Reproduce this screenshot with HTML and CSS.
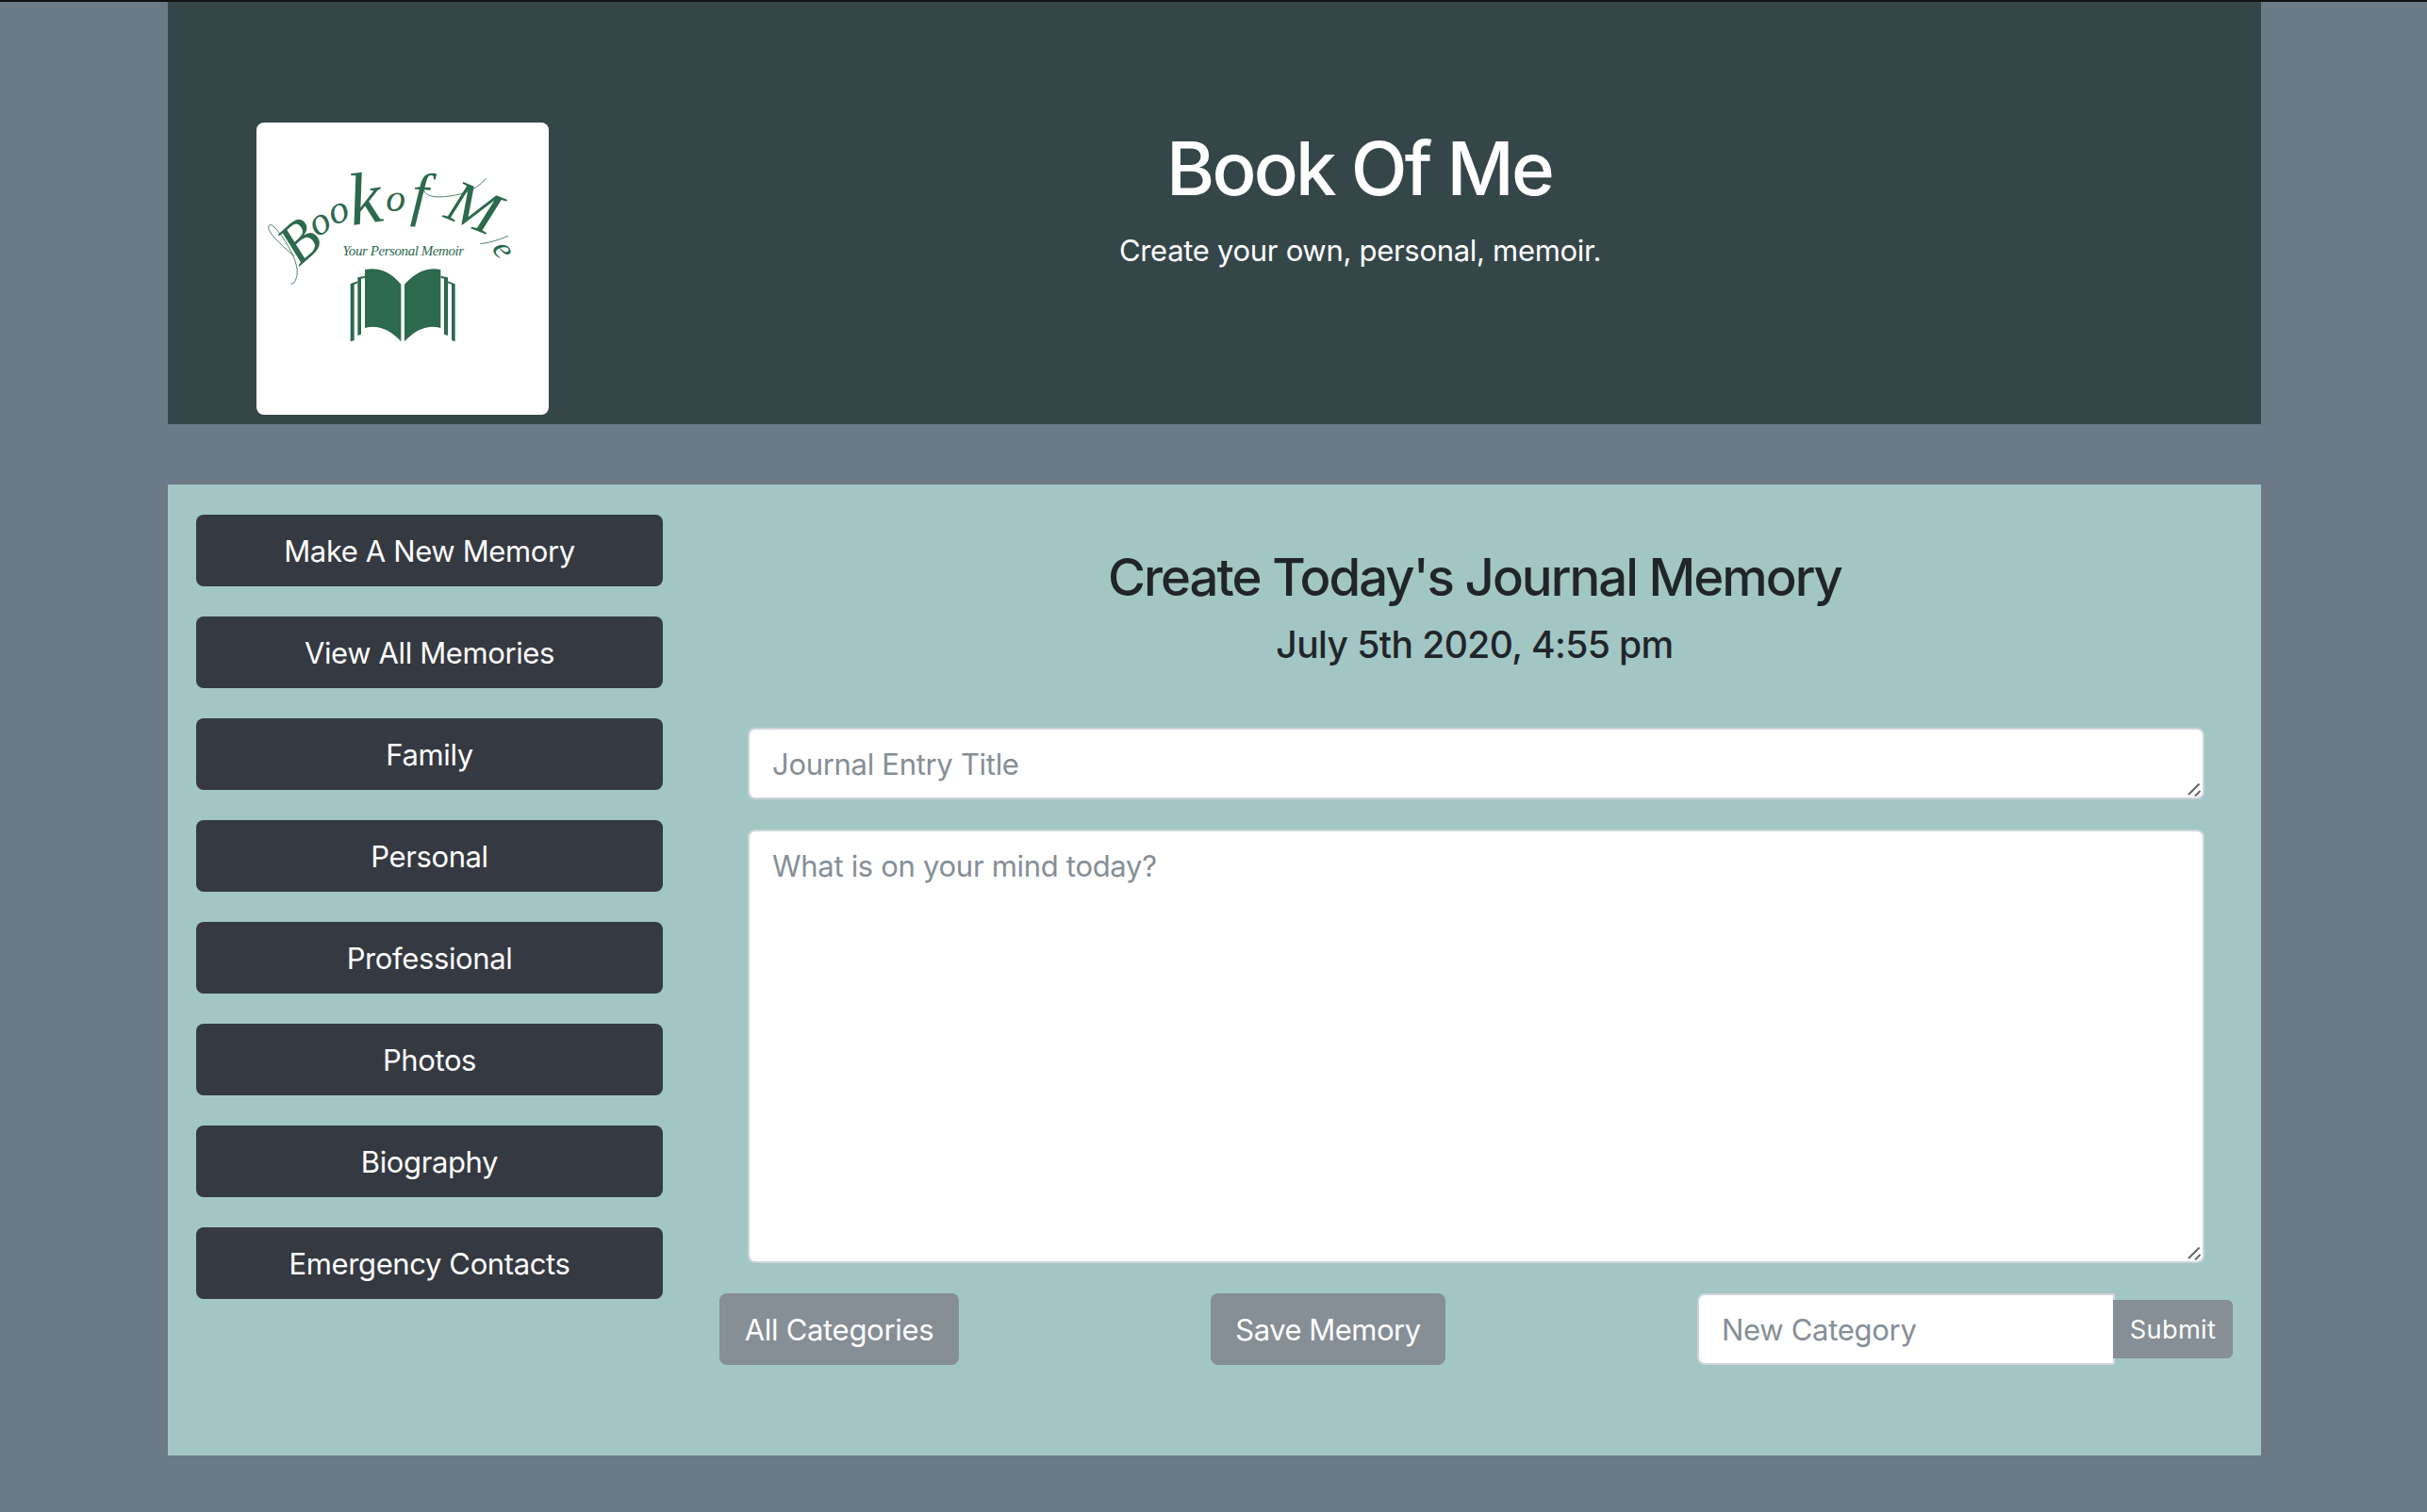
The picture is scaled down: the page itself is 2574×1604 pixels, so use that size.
FILE: index.html
```
<!DOCTYPE html>
<html lang="en">
<head>
<meta charset="utf-8">
<title>Book Of Me</title>
<link rel="stylesheet" href="styles.css">
</head>
<body>
<div class="page">
  <header class="banner">
    <svg class="logo" viewBox="30 30 930 930" role="img" aria-label="Book of Me logo">
      <g class="logo-flourish">
        <path d="M150 455C90 405 60 370 70 357C80 345 120 400 140 440C165 490 162 515 154 532Q149 546 140 543"/>
        <path d="M562 243C568 272 620 272 685 256Q735 240 760 208"/>
        <path d="M742 416Q780 412 831 391"/>
      </g>
      <text class="logo-name"><tspan class="logo-b" x="165" y="490" rotate="-42">B</tspan><tspan class="logo-o" x="222" y="396" rotate="-30">o</tspan><tspan class="logo-o" x="274" y="357" rotate="-20">o</tspan><tspan class="logo-k" x="334" y="357" rotate="-8">k</tspan> <tspan class="logo-o" x="442" y="313" rotate="0">o</tspan><tspan class="logo-f" x="520" y="320" rotate="4">f</tspan> <tspan class="logo-m" x="622" y="330" rotate="22">M</tspan><tspan class="logo-e" x="778" y="430" rotate="60">e</tspan></text>
      <text class="logo-tagline" x="304" y="452" textLength="386">Your Personal Memoir</text>
      <g class="logo-book">
        <path d="M375 498Q440 485 490 545V727Q435 668 375 684Z"/>
        <path d="M501 545Q555 485 616 498V684Q556 668 501 727Z"/>
        <path d="M352 523L375 518V524L363 527V704L352 708Z"/>
        <path d="M329 543L352 535V541L341 545V723L329 727Z"/>
        <path d="M616 518L639 523V708L627 704V527L616 524Z"/>
        <path d="M639 535L662 544V727L651 723V545L639 541Z"/>
      </g>
    </svg>
    <div class="banner-text">
      <h1>Book Of Me</h1>
      <p>Create your own, personal, memoir.</p>
    </div>
  </header>

  <main class="panel">
    <nav class="menu">
      <button type="button">Make A New Memory</button>
      <button type="button">View All Memories</button>
      <button type="button">Family</button>
      <button type="button">Personal</button>
      <button type="button">Professional</button>
      <button type="button">Photos</button>
      <button type="button">Biography</button>
      <button type="button">Emergency Contacts</button>
    </nav>

    <section class="journal">
      <h2>Create Today's Journal Memory</h2>
      <h4>July 5th 2020, 4:55 pm</h4>
      <div class="field field-title">
        <textarea class="control" placeholder="Journal Entry Title"></textarea>
        <svg class="grip" viewBox="0 0 16 16"><path d="M2 13L13.5 1.5M9 14.5L14.5 9"/></svg>
      </div>
      <div class="field field-body">
        <textarea class="control" placeholder="What is on your mind today?"></textarea>
        <svg class="grip" viewBox="0 0 16 16"><path d="M2 13L13.5 1.5M9 14.5L14.5 9"/></svg>
      </div>
      <div class="actions">
        <button class="btn btn-categories" type="button">All Categories</button>
        <button class="btn btn-save" type="button">Save Memory</button>
        <div class="input-group">
          <input class="control" type="text" placeholder="New Category">
          <button class="btn btn-submit" type="button">Submit</button>
        </div>
      </div>
    </section>
  </main>
</div>
</body>
</html>
```
FILE: styles.css
```
* { box-sizing: border-box; }

body {
  margin: 0;
  min-height: 1604px;
  background: #6c7987;
  border-top: 2px solid #101213;
  font-family: Inter, "Liberation Sans", sans-serif;
  font-size: 31px;
  font-weight: 430;
  line-height: 48px;
  letter-spacing: -0.3px;
  color: #212529;
}

h1, h2, h4, p { margin: 0; font-weight: 530; }

button, input, textarea {
  margin: 0;
  font: inherit;
  letter-spacing: inherit;
}

.page {
  width: 2220px;
  margin-left: 178px;
}

/* Header */
.banner {
  display: flex;
  gap: 20px;
  height: 448px;
  padding: 128px 115px 0 94px;
  background: #354649;
  color: #fff;
}

.logo {
  flex: none;
  width: 310px;
  height: 310px;
  border-radius: 8px;
  background: #fff;
}

.logo-name, .logo-tagline, .logo-book { fill: #2c694d; }

.logo-name {
  font-family: "Liberation Serif", serif;
  font-style: italic;
  font-weight: 400;
}

.logo-b { font-size: 185px; }
.logo-o { font-size: 125px; }
.logo-k { font-size: 235px; }
.logo-f { font-size: 190px; }
.logo-m { font-size: 195px; }
.logo-e { font-size: 105px; }

.logo-tagline {
  font-family: "Liberation Serif", serif;
  font-size: 45px;
  font-style: italic;
  font-weight: 400;
}

.logo-flourish {
  fill: none;
  stroke: #2c694d;
  stroke-width: 2.5;
}

.banner-text {
  flex: 1;
  text-align: center;
}

.banner-text h1 {
  font-size: 78px;
  line-height: 96px;
  letter-spacing: -2.8px;
  padding-top: 1px;
  margin-right: 2px;
}

.banner-text p {
  font-weight: inherit;
  padding-top: 15px;
}

/* Main panel */
.panel {
  display: flex;
  gap: 60px;
  height: 1030px;
  margin-top: 64px;
  padding: 32px 30px 0;
  background: #a2c6c4;
}

.menu {
  display: flex;
  flex-direction: column;
  gap: 32px;
  width: 495px;
}

.menu button {
  height: 76px;
  padding: 2px 0 0;
  border: 0;
  border-radius: 8px;
  background: #353941;
  color: #fff;
  letter-spacing: -0.38px;
}

.journal {
  flex: 1;
  text-align: center;
}

.journal h2 {
  padding: 32px 3px 0 0;
  font-size: 54.5px;
  line-height: 68px;
  letter-spacing: -1.98px;
}

.journal h4 {
  padding: 14px 3px 0 0;
  font-size: 39px;
  letter-spacing: -0.58px;
}

.field {
  position: relative;
  margin: 0 30px 32px;
}

.field-title { height: 76px; margin-top: 64px; }
.field-body { height: 460px; }

.control {
  display: block;
  width: 100%;
  height: 100%;
  padding: 13px 24px 11px;
  border: 2px solid #ced4da;
  border-radius: 8px;
  background: #fff;
  resize: none;
  overflow: hidden;
}

.control::placeholder { color: #868e96; opacity: 1; }

.grip {
  position: absolute;
  right: 3px;
  bottom: 2px;
  width: 16px;
  height: 16px;
  fill: none;
  stroke: #666;
  stroke-width: 2;
}

.actions {
  display: flex;
  justify-content: space-between;
}

.btn {
  height: 76px;
  padding: 2px 0 0;
  border: 0;
  border-radius: 8px;
  background: #868e96;
  color: #fff;
}

.btn-categories { width: 254px; }
.btn-save { width: 249px; letter-spacing: -0.5px; }

.input-group {
  display: flex;
  align-items: center;
  width: 568px;
}

.input-group .control {
  width: 443px;
  height: 76px;
  padding: 12px 24px;
  border-radius: 8px 0 0 8px;
}

.btn-submit {
  width: 127px;
  height: 62px;
  margin-left: -2px;
  border-radius: 0 6px 6px 0;
  font-size: 27.3px;
  letter-spacing: 0.25px;
}
```
